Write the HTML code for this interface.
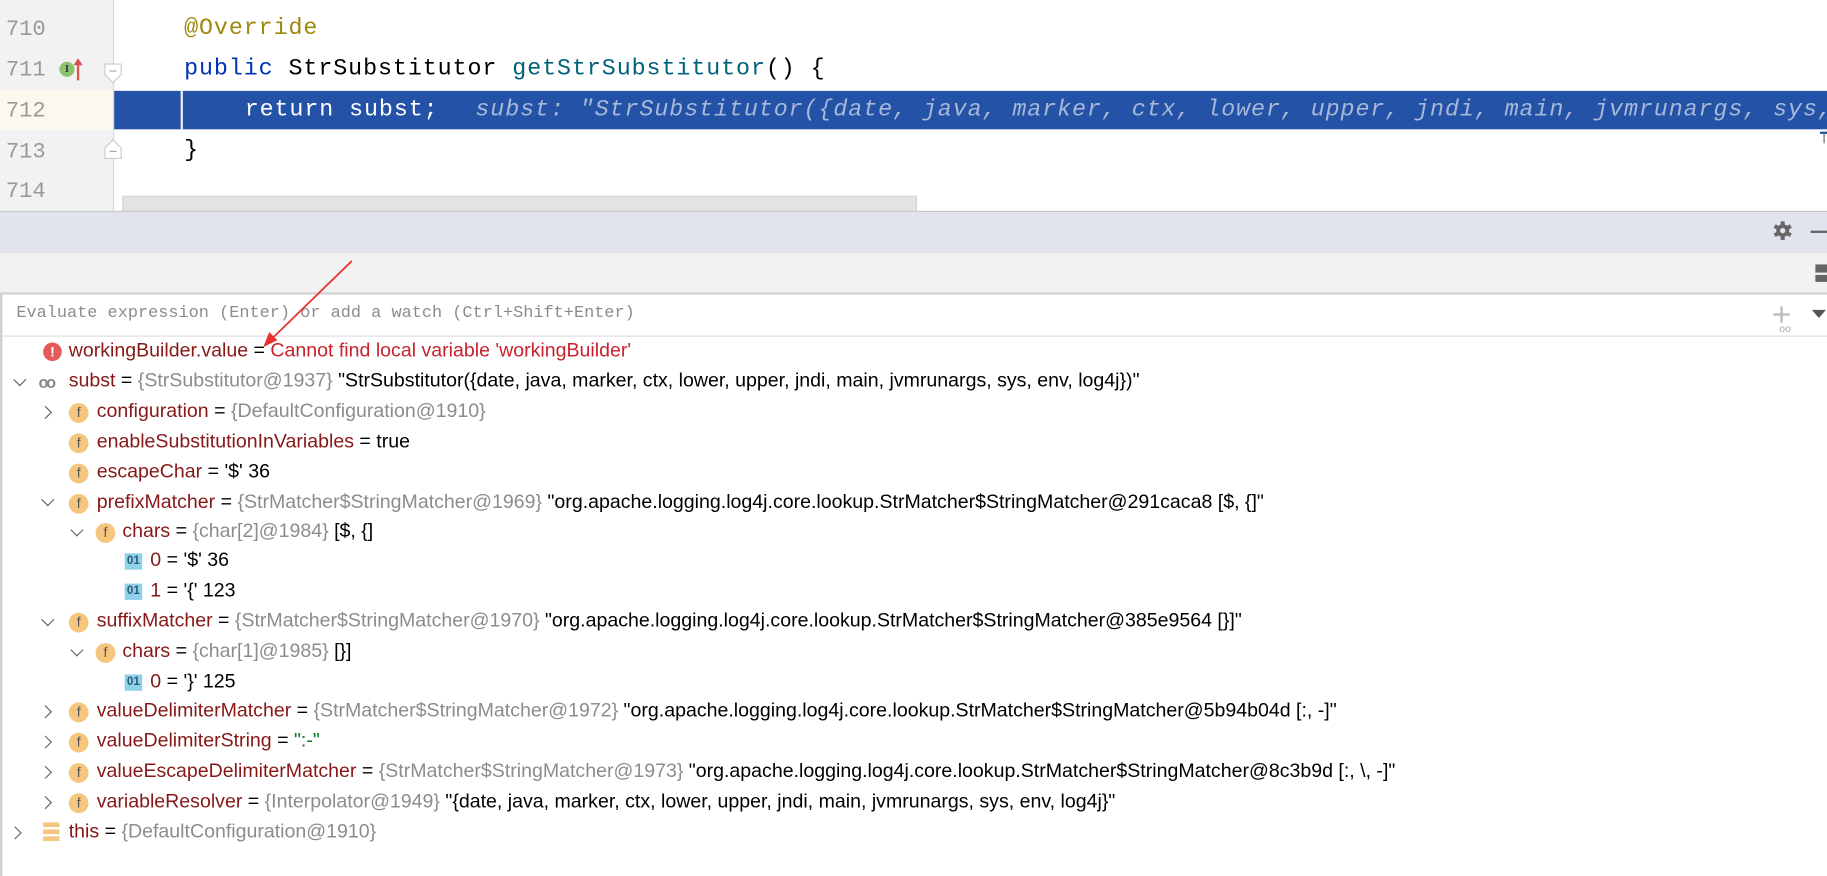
<!DOCTYPE html>
<html><head><meta charset="utf-8"><style>
html,body{margin:0;padding:0;background:#fff;overflow:hidden}
#w{position:absolute;left:0;top:0;width:1568px;height:752px;transform:scale(1.16518,1.1649);transform-origin:0 0;overflow:hidden;background:#fff}
.a{position:absolute;white-space:nowrap}
.mono{font-family:"Liberation Mono",monospace;font-size:20px;letter-spacing:0.8px}
.ln{font-family:"Liberation Mono",monospace;font-size:19px;color:#999;left:5px}
.t{font-family:"Liberation Sans","Noto Sans CJK SC",sans-serif;font-size:16.8px;color:#000;line-height:20px}
.n{color:#871818}.g{color:#8c8c8c}.s{color:#067d17}
.arr{position:absolute;width:7px;height:7px;border-right:1.6px solid #666;border-bottom:1.6px solid #666}
.r{transform:rotate(-45deg)}.d{transform:rotate(45deg)}
.f{position:absolute;width:17px;height:17px;border-radius:50%;background:#f5c77e;font-family:"Liberation Sans",sans-serif;font-size:12px;color:#555;text-align:center;line-height:17px}
.o1{position:absolute;width:15px;height:14px;background:#8fd0ec;font-family:"Liberation Sans",sans-serif;font-size:10px;font-weight:bold;color:#2d5c70;text-align:center;line-height:14px}
</style></head><body><div id="w">
<div class="a" style="left:0;top:0;width:97px;height:181px;background:#f2f2f2;border-right:1px solid #d8d8d8"></div>
<div class="a" style="left:0;top:78px;width:97px;height:33px;background:#fbf9ee"></div>
<div class="a ln" style="top:14px">710</div>
<div class="a ln" style="top:49px">711</div>
<div class="a ln" style="top:84px">712</div>
<div class="a ln" style="top:119px">713</div>
<div class="a ln" style="top:153px">714</div>
<div class="a" style="left:51px;top:53px;width:13px;height:13px;border-radius:50%;background:#8cc36f;font:bold 9px 'Liberation Serif',serif;color:#333;text-align:center;line-height:13px">I</div>
<div class="a" style="left:66px;top:52px;width:1.5px;height:17px;background:#d9534f"></div>
<div class="a" style="left:63px;top:50px;width:0;height:0;border-left:4px solid transparent;border-right:4px solid transparent;border-bottom:6px solid #d9534f"></div>
<svg class="a" style="left:89px;top:54px" width="16" height="18"><path d="M1 1H15V10L8 17L1 10Z" fill="#fff" stroke="#ccc"/><path d="M5 7H11" stroke="#aaa"/></svg>
<svg class="a" style="left:89px;top:119px" width="16" height="18"><path d="M1 17H15V8L8 1L1 8Z" fill="#fff" stroke="#ccc"/><path d="M5 11H11" stroke="#aaa"/></svg>
<div class="a" style="left:98px;top:78px;width:1470px;height:33px;background:#2452a6"></div>
<div class="a" style="left:155px;top:78px;width:2px;height:33px;background:#e8eef8"></div>
<div class="a mono" style="left:158px;top:13px;color:#9e880d">@Override</div>
<div class="a mono" style="left:158px;top:48px;color:#000"><span style="color:#0033b3">public</span> StrSubstitutor <span style="color:#00627a">getStrSubstitutor</span>() {</div>
<div class="a mono" style="left:210px;top:83px;color:#fff">return subst;</div>
<div class="a mono" style="left:408px;top:83px;color:#a8b8d8;font-style:italic">subst: "StrSubstitutor({date, java, marker, ctx, lower, upper, jndi, main, jvmrunargs, sys, env, log4j})"</div>
<div class="a mono" style="left:158px;top:118px;color:#000">}</div>
<div class="a" style="left:1562px;top:113px;width:6px;height:2px;background:#2452a6"></div>
<div class="a" style="left:1565px;top:113px;width:1px;height:10px;background:#666"></div>
<div class="a" style="left:105px;top:168px;width:680px;height:12px;background:#e3e3e3;border:1px solid #d6d6d6"></div>
<div class="a" style="left:0;top:181px;width:1568px;height:35px;background:#e1e4ec;border-top:1px solid #c9c9c9;border-bottom:1px solid #cfcfcf"></div>
<svg class="a" style="left:1521px;top:189px" width="18" height="18" viewBox="0 0 18 18"><g fill="#666"><circle cx="9" cy="9" r="5.5"/><rect x="7.3" y="1" width="3.4" height="16"/><rect x="7.3" y="1" width="3.4" height="16" transform="rotate(60 9 9)"/><rect x="7.3" y="1" width="3.4" height="16" transform="rotate(120 9 9)"/></g><circle cx="9" cy="9" r="2.3" fill="#e1e4ec"/></svg>
<div class="a" style="left:1554px;top:198px;width:14px;height:2px;background:#666"></div>
<div class="a" style="left:0;top:217px;width:1568px;height:34px;background:#f2f2f2;border-bottom:2px solid #d2d2d2"></div>
<div class="a" style="left:1558px;top:227px;width:10px;height:7px;background:#666"></div>
<div class="a" style="left:1558px;top:236px;width:10px;height:6px;background:#666"></div>
<div class="a" style="left:2px;top:253px;width:1566px;height:35px;background:#fff;border-bottom:1px solid #dcdcdc"></div>
<div class="a" style="left:0;top:253px;width:2px;height:499px;background:#cfcfcf"></div>
<div class="a" style="left:14px;top:261px;font-family:'Liberation Mono',monospace;font-size:14.5px;color:#8c8c8c">Evaluate expression (Enter) or add a watch (Ctrl+Shift+Enter)</div>
<div class="a" style="left:1522px;top:269px;width:14px;height:2px;background:#bbb"></div>
<div class="a" style="left:1528px;top:263px;width:2px;height:14px;background:#bbb"></div>
<div class="a" style="left:1527px;top:277px;font:9px 'Liberation Sans';color:#aaa">oo</div>
<div class="a" style="left:1555px;top:266px;width:0;height:0;border-left:6px solid transparent;border-right:6px solid transparent;border-top:7px solid #555"></div>

<div class="a" style="left:37px;top:294px;width:16px;height:16px;border-radius:50%;background:#e55b5b;color:#fff;font:bold 12px 'Liberation Sans';text-align:center;line-height:16px">!</div>
<div class="a t" style="left:59px;top:291px"><span class="n">workingBuilder.value</span> = <span style="color:#c7222d">Cannot find local variable 'workingBuilder'</span></div>

<div class="arr d" style="left:13px;top:322px"></div>
<div class="a" style="left:33px;top:320px;font:bold 14px 'Liberation Sans';color:#888;letter-spacing:-2px">oo</div>
<div class="a t" style="left:59px;top:317px"><span class="n">subst</span> = <span class="g">{StrSubstitutor@1937}</span> "StrSubstitutor({date, java, marker, ctx, lower, upper, jndi, main, jvmrunargs, sys, env, log4j})"</div>

<div class="arr r" style="left:35px;top:350px"></div>
<div class="f" style="left:59px;top:346px">f</div>
<div class="a t" style="left:83px;top:343px"><span class="n">configuration</span> = <span class="g">{DefaultConfiguration@1910}</span></div>

<div class="f" style="left:59px;top:372px">f</div>
<div class="a t" style="left:83px;top:369px"><span class="n">enableSubstitutionInVariables</span> = true</div>

<div class="f" style="left:59px;top:398px">f</div>
<div class="a t" style="left:83px;top:395px"><span class="n">escapeChar</span> = '$' 36</div>

<div class="arr d" style="left:37px;top:425px"></div>
<div class="f" style="left:59px;top:424px">f</div>
<div class="a t" style="left:83px;top:421px"><span class="n">prefixMatcher</span> = <span class="g">{StrMatcher$StringMatcher@1969}</span> "org.apache.logging.log4j.core.lookup.StrMatcher$StringMatcher@291caca8 [$, {]"</div>

<div class="arr d" style="left:62px;top:451px"></div>
<div class="f" style="left:82px;top:449px">f</div>
<div class="a t" style="left:105px;top:446px"><span class="n">chars</span> = <span class="g">{char[2]@1984}</span> [$, {]</div>

<div class="o1" style="left:107px;top:475px">01</div>
<div class="a t" style="left:129px;top:471px"><span class="n">0</span> = '$' 36</div>
<div class="o1" style="left:107px;top:501px">01</div>
<div class="a t" style="left:129px;top:497px"><span class="n">1</span> = '{' 123</div>

<div class="arr d" style="left:37px;top:528px"></div>
<div class="f" style="left:59px;top:526px">f</div>
<div class="a t" style="left:83px;top:523px"><span class="n">suffixMatcher</span> = <span class="g">{StrMatcher$StringMatcher@1970}</span> "org.apache.logging.log4j.core.lookup.StrMatcher$StringMatcher@385e9564 [}]"</div>

<div class="arr d" style="left:62px;top:554px"></div>
<div class="f" style="left:82px;top:552px">f</div>
<div class="a t" style="left:105px;top:549px"><span class="n">chars</span> = <span class="g">{char[1]@1985}</span> [}]</div>

<div class="o1" style="left:107px;top:579px">01</div>
<div class="a t" style="left:129px;top:575px"><span class="n">0</span> = '}' 125</div>

<div class="arr r" style="left:35px;top:607px"></div>
<div class="f" style="left:59px;top:603px">f</div>
<div class="a t" style="left:83px;top:600px"><span class="n">valueDelimiterMatcher</span> = <span class="g">{StrMatcher$StringMatcher@1972}</span> "org.apache.logging.log4j.core.lookup.StrMatcher$StringMatcher@5b94b04d [:, -]"</div>

<div class="arr r" style="left:35px;top:633px"></div>
<div class="f" style="left:59px;top:629px">f</div>
<div class="a t" style="left:83px;top:626px"><span class="n">valueDelimiterString</span> = <span class="s">":-"</span></div>

<div class="arr r" style="left:35px;top:659px"></div>
<div class="f" style="left:59px;top:655px">f</div>
<div class="a t" style="left:83px;top:652px"><span class="n">valueEscapeDelimiterMatcher</span> = <span class="g">{StrMatcher$StringMatcher@1973}</span> "org.apache.logging.log4j.core.lookup.StrMatcher$StringMatcher@8c3b9d [:, \, -]"</div>

<div class="arr r" style="left:35px;top:685px"></div>
<div class="f" style="left:59px;top:681px">f</div>
<div class="a t" style="left:83px;top:678px"><span class="n">variableResolver</span> = <span class="g">{Interpolator@1949}</span> "{date, java, marker, ctx, lower, upper, jndi, main, jvmrunargs, sys, env, log4j}"</div>

<div class="arr r" style="left:9px;top:711px"></div>
<div class="a" style="left:37px;top:706px;width:14px;height:4px;background:#f5c77e;box-shadow:0 6px 0 #f5c77e,0 12px 0 #f5c77e"></div>
<div class="a t" style="left:59px;top:704px"><span class="n">this</span> = <span class="g">{DefaultConfiguration@1910}</span></div>

<svg class="a" style="left:0;top:0" width="1568" height="752"><line x1="302" y1="224" x2="230" y2="294" stroke="#e8322d" stroke-width="1.5"/><path d="M226 298 L231 285 L238 292 Z" fill="#e8322d"/></svg>
</div></body></html>
